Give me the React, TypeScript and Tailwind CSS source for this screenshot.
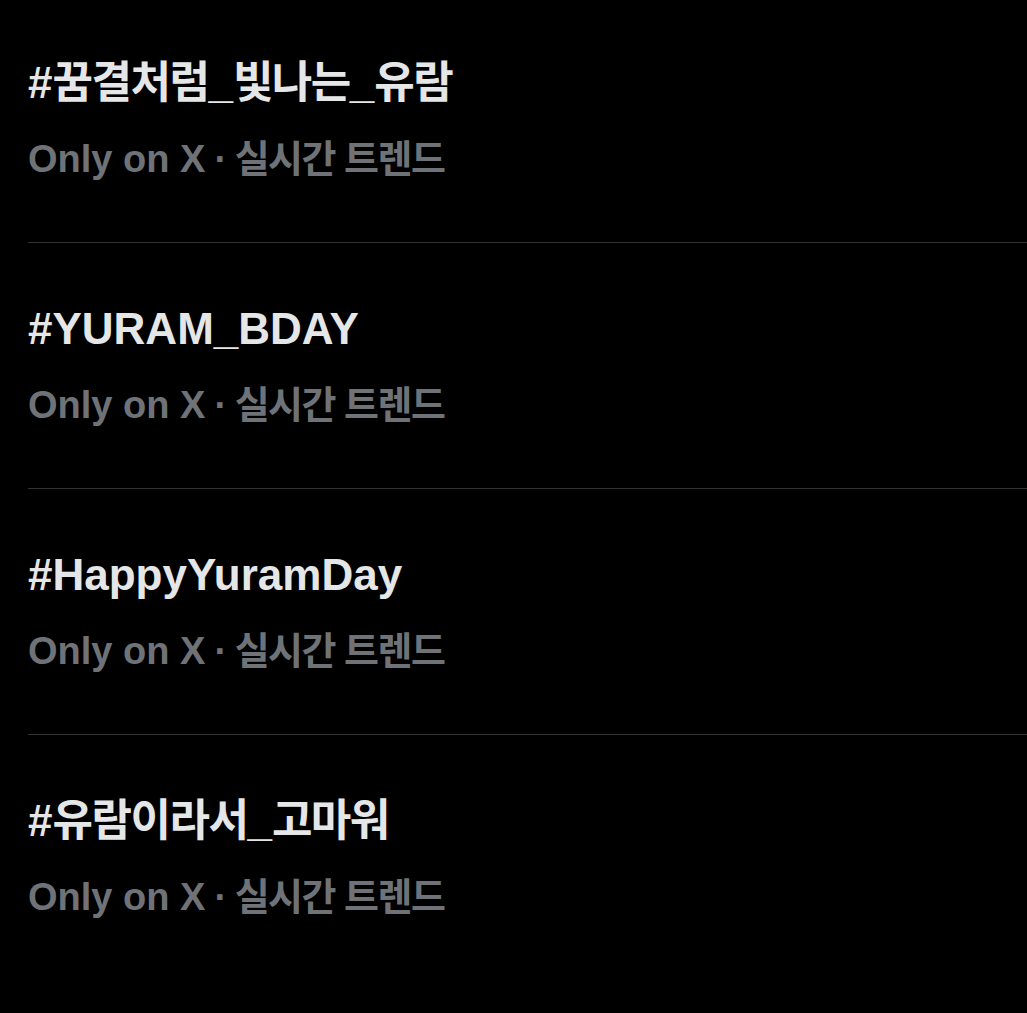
import React from "react";

const trends = [
  "#꿈결처럼_빛나는_유람",
  "#YURAM_BDAY",
  "#HappyYuramDay",
  "#유람이라서_고마워",
];

const fontStack = {
  fontFamily: '"Liberation Sans", "Noto Sans CJK KR", sans-serif',
};

// Hangul runs get slightly tighter tracking than the Latin text around them
function Mixed({ text }: { text: string }) {
  const parts = text.split(/([\uAC00-\uD7A3]+)/).filter(Boolean);
  return (
    <>
      {parts.map((p, i) =>
        /[\uAC00-\uD7A3]/.test(p) ? (
          <span key={i} className="tracking-[-1.5px]">
            {p}
          </span>
        ) : (
          <span key={i}>{p}</span>
        )
      )}
    </>
  );
}

export default function App() {
  return (
    <div className="min-h-[1013px] w-full overflow-hidden bg-black" style={fontStack}>
      <div className="-mt-[3px] pl-[28px]">
        {trends.map((tag, i) => (
          <div
            key={i}
            className={`h-[246px] pt-[60px] ${i < trends.length - 1 ? "border-b border-[#2f3336]" : ""}`}
          >
            <div className="text-[44px] font-bold leading-[52px] text-[#e4e6e7]">
              <Mixed text={tag} />
            </div>
            <div className="mt-[26px] text-[38px] font-bold leading-[48px] text-[#6f7377]">
              <span>Only on X</span>
              <span className="tracking-[-1.5px]"> · </span>
              <span className="tracking-[-1.5px]">실시간 트렌드</span>
            </div>
          </div>
        ))}
      </div>
    </div>
  );
}
